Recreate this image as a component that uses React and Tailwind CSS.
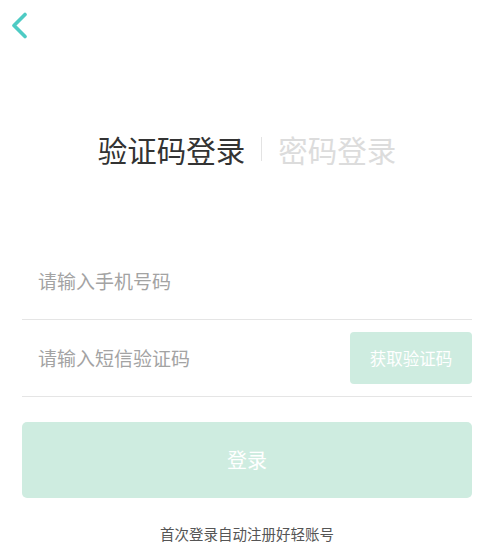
import { useState } from "react";

const font = { fontFamily: '"Noto Sans CJK SC", "Noto Sans", sans-serif' };

export default function App() {
    const [phone, setPhone] = useState("");
    const [code, setCode] = useState("");

    return (
        <div className="min-h-[549px] w-[481px] bg-white" style={font}>
            <div className="h-[50px] pl-[10px] pt-[12px]">
                <svg width="18" height="27" viewBox="0 0 18 27" fill="none">
                    <path d="M15 2.5 L4 13.5 L15 24.5" stroke="#4ecbc4" strokeWidth="3.6" strokeLinecap="round" strokeLinejoin="round" />
                </svg>
            </div>

            <div className="ml-[22px] mr-[9px]">
                <div className="mt-[82px] flex items-center justify-center">
                    <span className="text-[29.5px] leading-[34px] text-[#333]">验证码登录</span>
                    <span className="mx-[16px] h-[24px] w-px bg-[#e3e3e3]" />
                    <span className="text-[29.5px] leading-[34px] text-[#dcdcdc]">密码登录</span>
                </div>

                <div className="mt-[84px] flex h-[70px] items-center border-b border-[#e5e5e5] pb-[6px] pl-[16px]">
                    <input
                        value={phone}
                        onChange={(e) => setPhone(e.target.value)}
                        placeholder="请输入手机号码"
                        className="w-full bg-transparent text-[19px] text-[#333] outline-none placeholder:text-[#a3a3a3]"
                    />
                </div>
                <div className="flex h-[77px] items-center border-b border-[#e5e5e5] pl-[16px]">
                    <input
                        value={code}
                        onChange={(e) => setCode(e.target.value)}
                        placeholder="请输入短信验证码"
                        className="min-w-0 flex-1 bg-transparent text-[19px] text-[#333] outline-none placeholder:text-[#a3a3a3]"
                    />
                    <button
                        type="button"
                        className="h-[52px] w-[122px] rounded-[4px] bg-[#ceece0] text-[16.5px] text-white"
                    >
                        获取验证码
                    </button>
                </div>

                <button
                    type="button"
                    className="mt-[25px] h-[76px] w-full rounded-[5px] bg-[#ceece0] text-[20px] text-white"
                >
                    登录
                </button>

                <p className="mt-[26px] text-center text-[14.5px] leading-[20px] text-[#555]">
                    首次登录自动注册好轻账号
                </p>
            </div>
        </div>
    );
}
